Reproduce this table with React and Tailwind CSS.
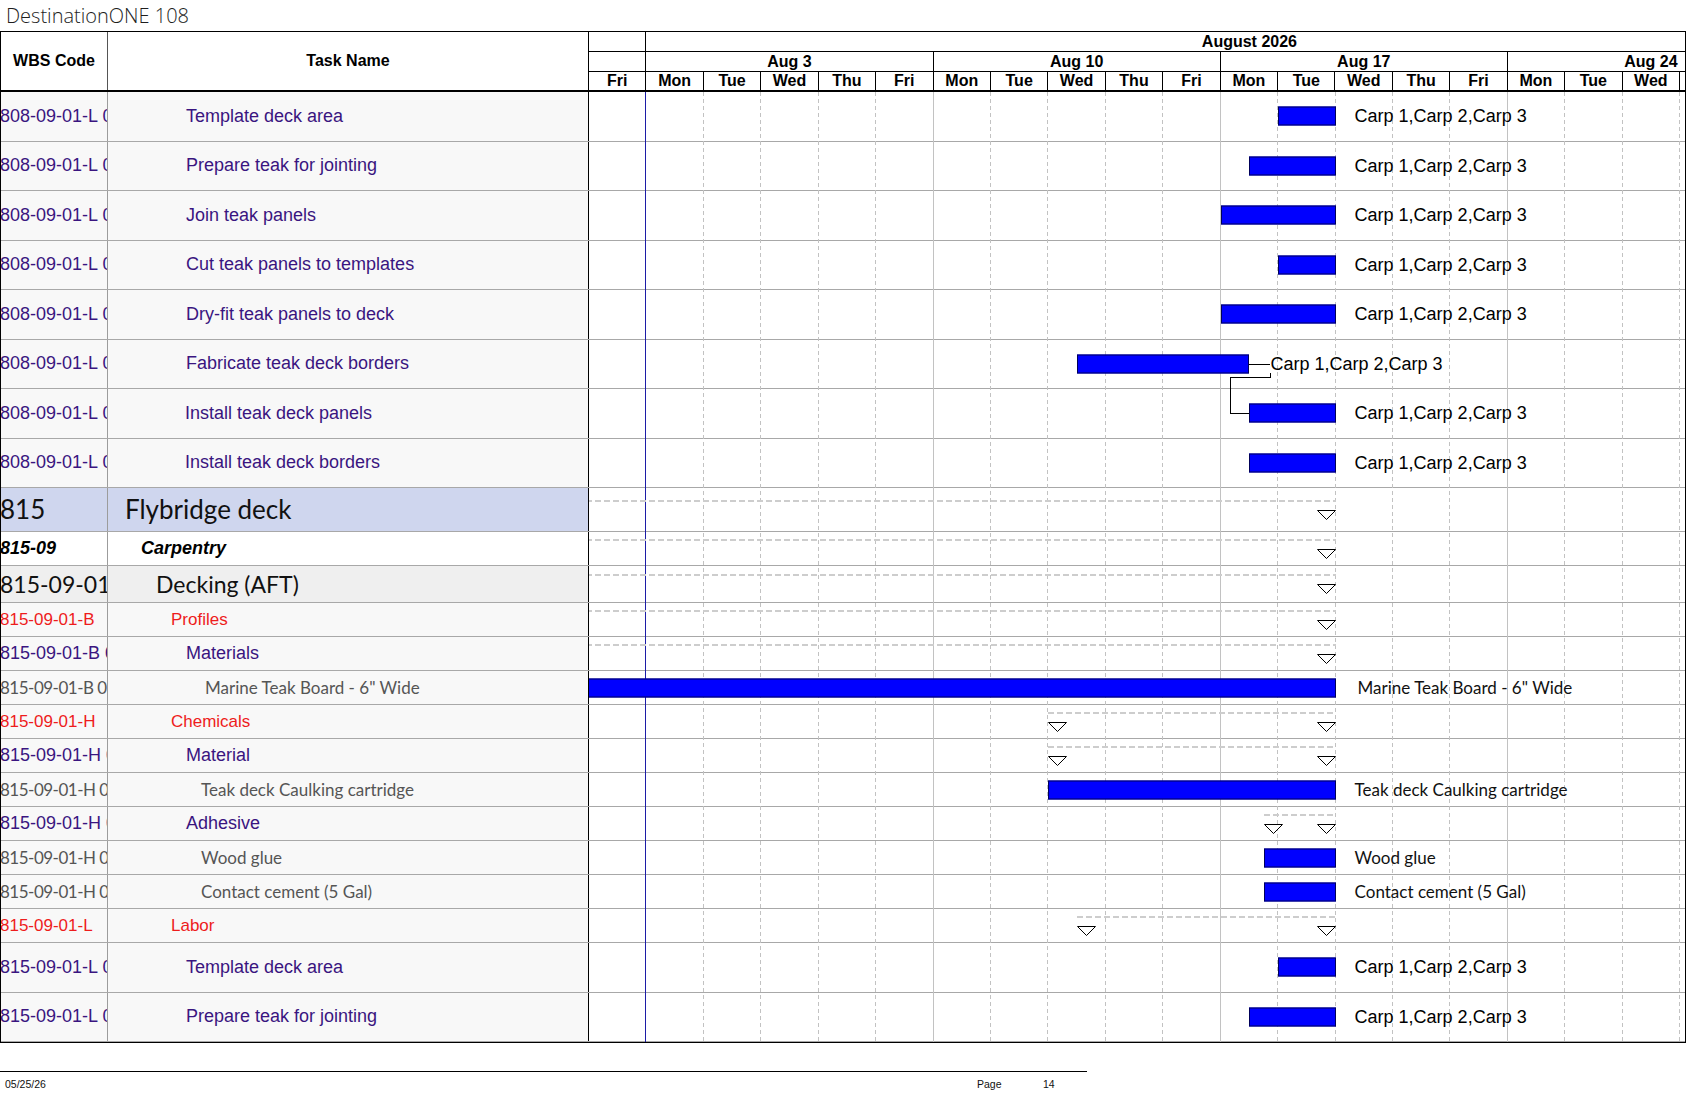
import React from 'react';

const DAY = 57.43;
const CARP = 'Carp 1,Carp 2,Carp 3';

// row looks, written out in full so tailwind picks them up
const LOOK = {
  task: { bg: 'bg-[#f8f8f8]', txt: "font-['Liberation_Sans',Arial,sans-serif] text-[18px] text-[#3a1580]", w: '' },
  top: { bg: 'bg-[#cfd6ee]', txt: "font-['Lato',sans-serif] text-[26px] text-[#111]", w: '' },
  cat: { bg: 'bg-white', txt: "font-['Liberation_Sans',Arial,sans-serif] text-[18px] font-bold italic text-black", w: '' },
  sub: { bg: 'bg-[#efefef]', txt: "font-['Lato',sans-serif] text-[23px] text-[#111]", w: '' },
  red: { bg: 'bg-[#f8f8f8]', txt: "font-['Liberation_Sans',Arial,sans-serif] text-[17px] text-[#ee1c1c]", w: '' },
  item: { bg: 'bg-[#f8f8f8]', txt: "font-['Lato',sans-serif] text-[17px] text-[#555]", w: 'tracking-[-0.5px]' },
};

const carpRow = (name, start, extra = {}) => ({
  wbs: '808-09-01-L 001', name, look: 'task', hc: 'h-[49.5px]', ind: 'pl-[78px]',
  bar: [start, 13], label: CARP, ...extra,
});

const rows = [
  carpRow('Template deck area', 12),
  carpRow('Prepare teak for jointing', 11.5),
  carpRow('Join teak panels', 11),
  carpRow('Cut teak panels to templates', 12),
  carpRow('Dry-fit teak panels to deck', 11),
  { ...carpRow('Fabricate teak deck borders', 8.5), bar: [8.5, 11.5], gap: 21 },
  { ...carpRow('Install teak deck panels', 11.5), ind: 'pl-[77px]' },
  { ...carpRow('Install teak deck borders', 11.5), ind: 'pl-[77px]' },
  { wbs: '815', name: 'Flybridge deck', look: 'top', hc: 'h-[44px]', ind: 'pl-[17px]', sum: [-1, 13] },
  { wbs: '815-09', name: 'Carpentry', look: 'cat', hc: 'h-[34px]', ind: 'pl-[33px]', sum: [-1, 13] },
  { wbs: '815-09-01', name: 'Decking (AFT)', look: 'sub', hc: 'h-[37px]', ind: 'pl-[48px]', sum: [-1, 13] },
  { wbs: '815-09-01-B', name: 'Profiles', look: 'red', hc: 'h-[34px]', ind: 'pl-[63px]', sum: [-1, 13] },
  { wbs: '815-09-01-B 001', name: 'Materials', look: 'task', hc: 'h-[34px]', ind: 'pl-[78px]', sum: [-1, 13] },
  { wbs: '815-09-01-B 01 01', name: 'Marine Teak Board - 6" Wide', look: 'item', hc: 'h-[34px]', ind: 'pl-[97px]', bar: [-1, 13], label: 'Marine Teak Board - 6" Wide', lab: 'item', gap: 22 },
  { wbs: '815-09-01-H', name: 'Chemicals', look: 'red', hc: 'h-[34px]', ind: 'pl-[63px]', sum: [8, 13], startTri: true },
  { wbs: '815-09-01-H 001', name: 'Material', look: 'task', hc: 'h-[34px]', ind: 'pl-[78px]', sum: [8, 13], startTri: true },
  { wbs: '815-09-01-H 01 01', name: 'Teak deck Caulking cartridge', look: 'item', hc: 'h-[34px]', ind: 'pl-[93px]', bar: [8, 13], label: 'Teak deck Caulking cartridge', lab: 'item' },
  { wbs: '815-09-01-H 002', name: 'Adhesive', look: 'task', hc: 'h-[34px]', ind: 'pl-[78px]', sum: [11.75, 13], startTri: true },
  { wbs: '815-09-01-H 02 01', name: 'Wood glue', look: 'item', hc: 'h-[34px]', ind: 'pl-[93px]', bar: [11.75, 13], label: 'Wood glue', lab: 'item' },
  { wbs: '815-09-01-H 02 02', name: 'Contact cement (5 Gal)', look: 'item', hc: 'h-[34px]', ind: 'pl-[93px]', bar: [11.75, 13], label: 'Contact cement (5 Gal)', lab: 'item' },
  { wbs: '815-09-01-L', name: 'Labor', look: 'red', hc: 'h-[34px]', ind: 'pl-[63px]', sum: [8.5, 13], startTri: true },
  { ...carpRow('Template deck area', 12), wbs: '815-09-01-L 001' },
  { ...carpRow('Prepare teak for jointing', 11.5), wbs: '815-09-01-L 002' },
];

const days = ['Fri', 'Mon', 'Tue', 'Wed', 'Thu', 'Fri', 'Mon', 'Tue', 'Wed', 'Thu', 'Fri', 'Mon', 'Tue', 'Wed', 'Thu', 'Fri', 'Mon', 'Tue', 'Wed'];
const weeks = ['Aug 3', 'Aug 10', 'Aug 17', 'Aug 24'];

function Tri({ left }) {
  return (
    <svg width="19" height="10" className="absolute top-1/2" style={{ left }}>
      <polygon points="0.5,0.5 18.5,0.5 9.5,9.5" fill="white" stroke="black" strokeWidth="1" />
    </svg>
  );
}

function ChartCell({ r }) {
  return (
    <div className="relative flex-1 overflow-hidden">
      {r.sum && (
        <>
          <div
            className="absolute top-[calc(50%-10px)] h-[2px] bg-[repeating-linear-gradient(90deg,#cdcdcd_0_6px,transparent_6px_9px)]"
            style={{ left: r.sum[0] * DAY, width: (r.sum[1] - r.sum[0]) * DAY }}
          />
          {r.startTri && <Tri left={r.sum[0] * DAY} />}
          <Tri left={r.sum[1] * DAY - 19} />
        </>
      )}
      {r.bar && (
        <>
          <div
            className="absolute top-1/2 -translate-y-1/2 h-[19px] bg-[#0000ff] border border-[#00005a]"
            style={{ left: r.bar[0] * DAY, width: (r.bar[1] - r.bar[0]) * DAY }}
          />
          <div
            className={`absolute top-1/2 -translate-y-1/2 whitespace-nowrap ${
              r.lab === 'item'
                ? "font-['Lato',sans-serif] text-[17px] text-[#111]"
                : "font-['Liberation_Sans',Arial,sans-serif] text-[18px] text-black"
            }`}
            style={{ left: r.bar[1] * DAY + (r.gap ?? 19) }}
          >
            {r.label}
          </div>
        </>
      )}
    </div>
  );
}

function Row({ r }) {
  const look = LOOK[r.look];
  return (
    <div className={`flex ${r.hc} border-b border-[#a8a8a8]`}>
      <div className={`w-[107px] shrink-0 flex items-center overflow-hidden whitespace-nowrap border-r border-[#9c9c9c] ${look.bg} ${look.txt} ${look.w}`}>
        <span className="-ml-px">{r.wbs}</span>
      </div>
      <div className={`w-[481px] shrink-0 flex items-center overflow-hidden whitespace-nowrap border-r border-black ${r.ind} ${look.bg} ${look.txt}`}>
        {r.name}
      </div>
      <ChartCell r={r} />
    </div>
  );
}

function TimeHeader() {
  return (
    <div className="flex-1 flex flex-col overflow-hidden font-['Liberation_Sans',Arial,sans-serif] text-[16px] font-bold text-black">
      <div className="flex h-[20px] border-b border-black shrink-0">
        <div className="w-[57.43px] shrink-0 border-r border-black" />
        <div className="w-[1206px] shrink-0 text-center leading-[19px]">August 2026</div>
      </div>
      <div className="flex h-[20px] border-b border-black shrink-0">
        <div className="w-[57.43px] shrink-0 border-r border-black" />
        {weeks.map((w) => (
          <div key={w} className="w-[287.15px] shrink-0 border-r border-black text-center leading-[19px]">{w}</div>
        ))}
      </div>
      <div className="flex h-[18px] shrink-0">
        {days.map((d, i) => (
          <div key={i} className="w-[57.43px] shrink-0 border-r border-black text-center leading-[18px]">{d}</div>
        ))}
      </div>
    </div>
  );
}

function GridLines() {
  const lines = [];
  for (let k = 1; k <= 19; k++) {
    const week = k === 1 || k === 6 || k === 11 || k === 16;
    lines.push(
      <div
        key={k}
        className={`absolute top-0 bottom-0 w-px ${
          week ? 'bg-[#c2c2c2]' : 'bg-[repeating-linear-gradient(180deg,#c2c2c2_0_4px,transparent_4px_7px)]'
        }`}
        style={{ left: k * DAY - 1 }}
      />
    );
  }
  return (
    <div className="absolute top-0 bottom-0 left-[588px] right-0 pointer-events-none">
      {lines}
      <div className="absolute top-0 bottom-0 w-px bg-[#1c1ca6]" style={{ left: DAY - 1 }} />
      {/* finish-to-start link, Fabricate borders -> Install panels */}
      <svg className="absolute top-0 left-0" width="800" height="400" shapeRendering="crispEdges">
        <g stroke="black" strokeWidth="1" fill="none">
          <path d={`M${11.5 * DAY} 272.5 H681`} />
          <path d="M681.5 281 V285.5 H641.5 V321.5" />
          <path d={`M641.5 321.5 H${11.5 * DAY}`} />
        </g>
      </svg>
    </div>
  );
}

export default function App() {
  return (
    <div className="w-[1687px] h-[1097px] bg-white overflow-hidden font-['Liberation_Sans',Arial,sans-serif]">
      <div className="h-[31px] pl-[6px] leading-[31px] text-[20px] font-light text-[#1e1e1e] font-['Open_Sans',sans-serif]">
        DestinationONE 108
      </div>

      <div className="w-[1686px] border border-black">
        {/* header */}
        <div className="flex h-[60px] border-b-2 border-black">
          <div className="w-[107px] shrink-0 border-r border-[#555] flex items-center justify-center text-[16px] font-bold">
            WBS Code
          </div>
          <div className="w-[481px] shrink-0 border-r border-black flex items-center justify-center text-[16px] font-bold">
            Task Name
          </div>
          <TimeHeader />
        </div>

        {/* body */}
        <div className="relative">
          <GridLines />
          {rows.map((r, i) => (
            <Row key={i} r={r} />
          ))}
        </div>
      </div>

      <div className="mt-[28px] w-[1087px] border-t border-black" />
      <div className="relative h-[14px] mt-[5px] text-[10.5px] leading-[14px] text-[#111]">
        <span className="absolute left-[5px]">05/25/26</span>
        <span className="absolute left-[977px]">Page</span>
        <span className="absolute left-[1043px]">14</span>
      </div>
    </div>
  );
}
